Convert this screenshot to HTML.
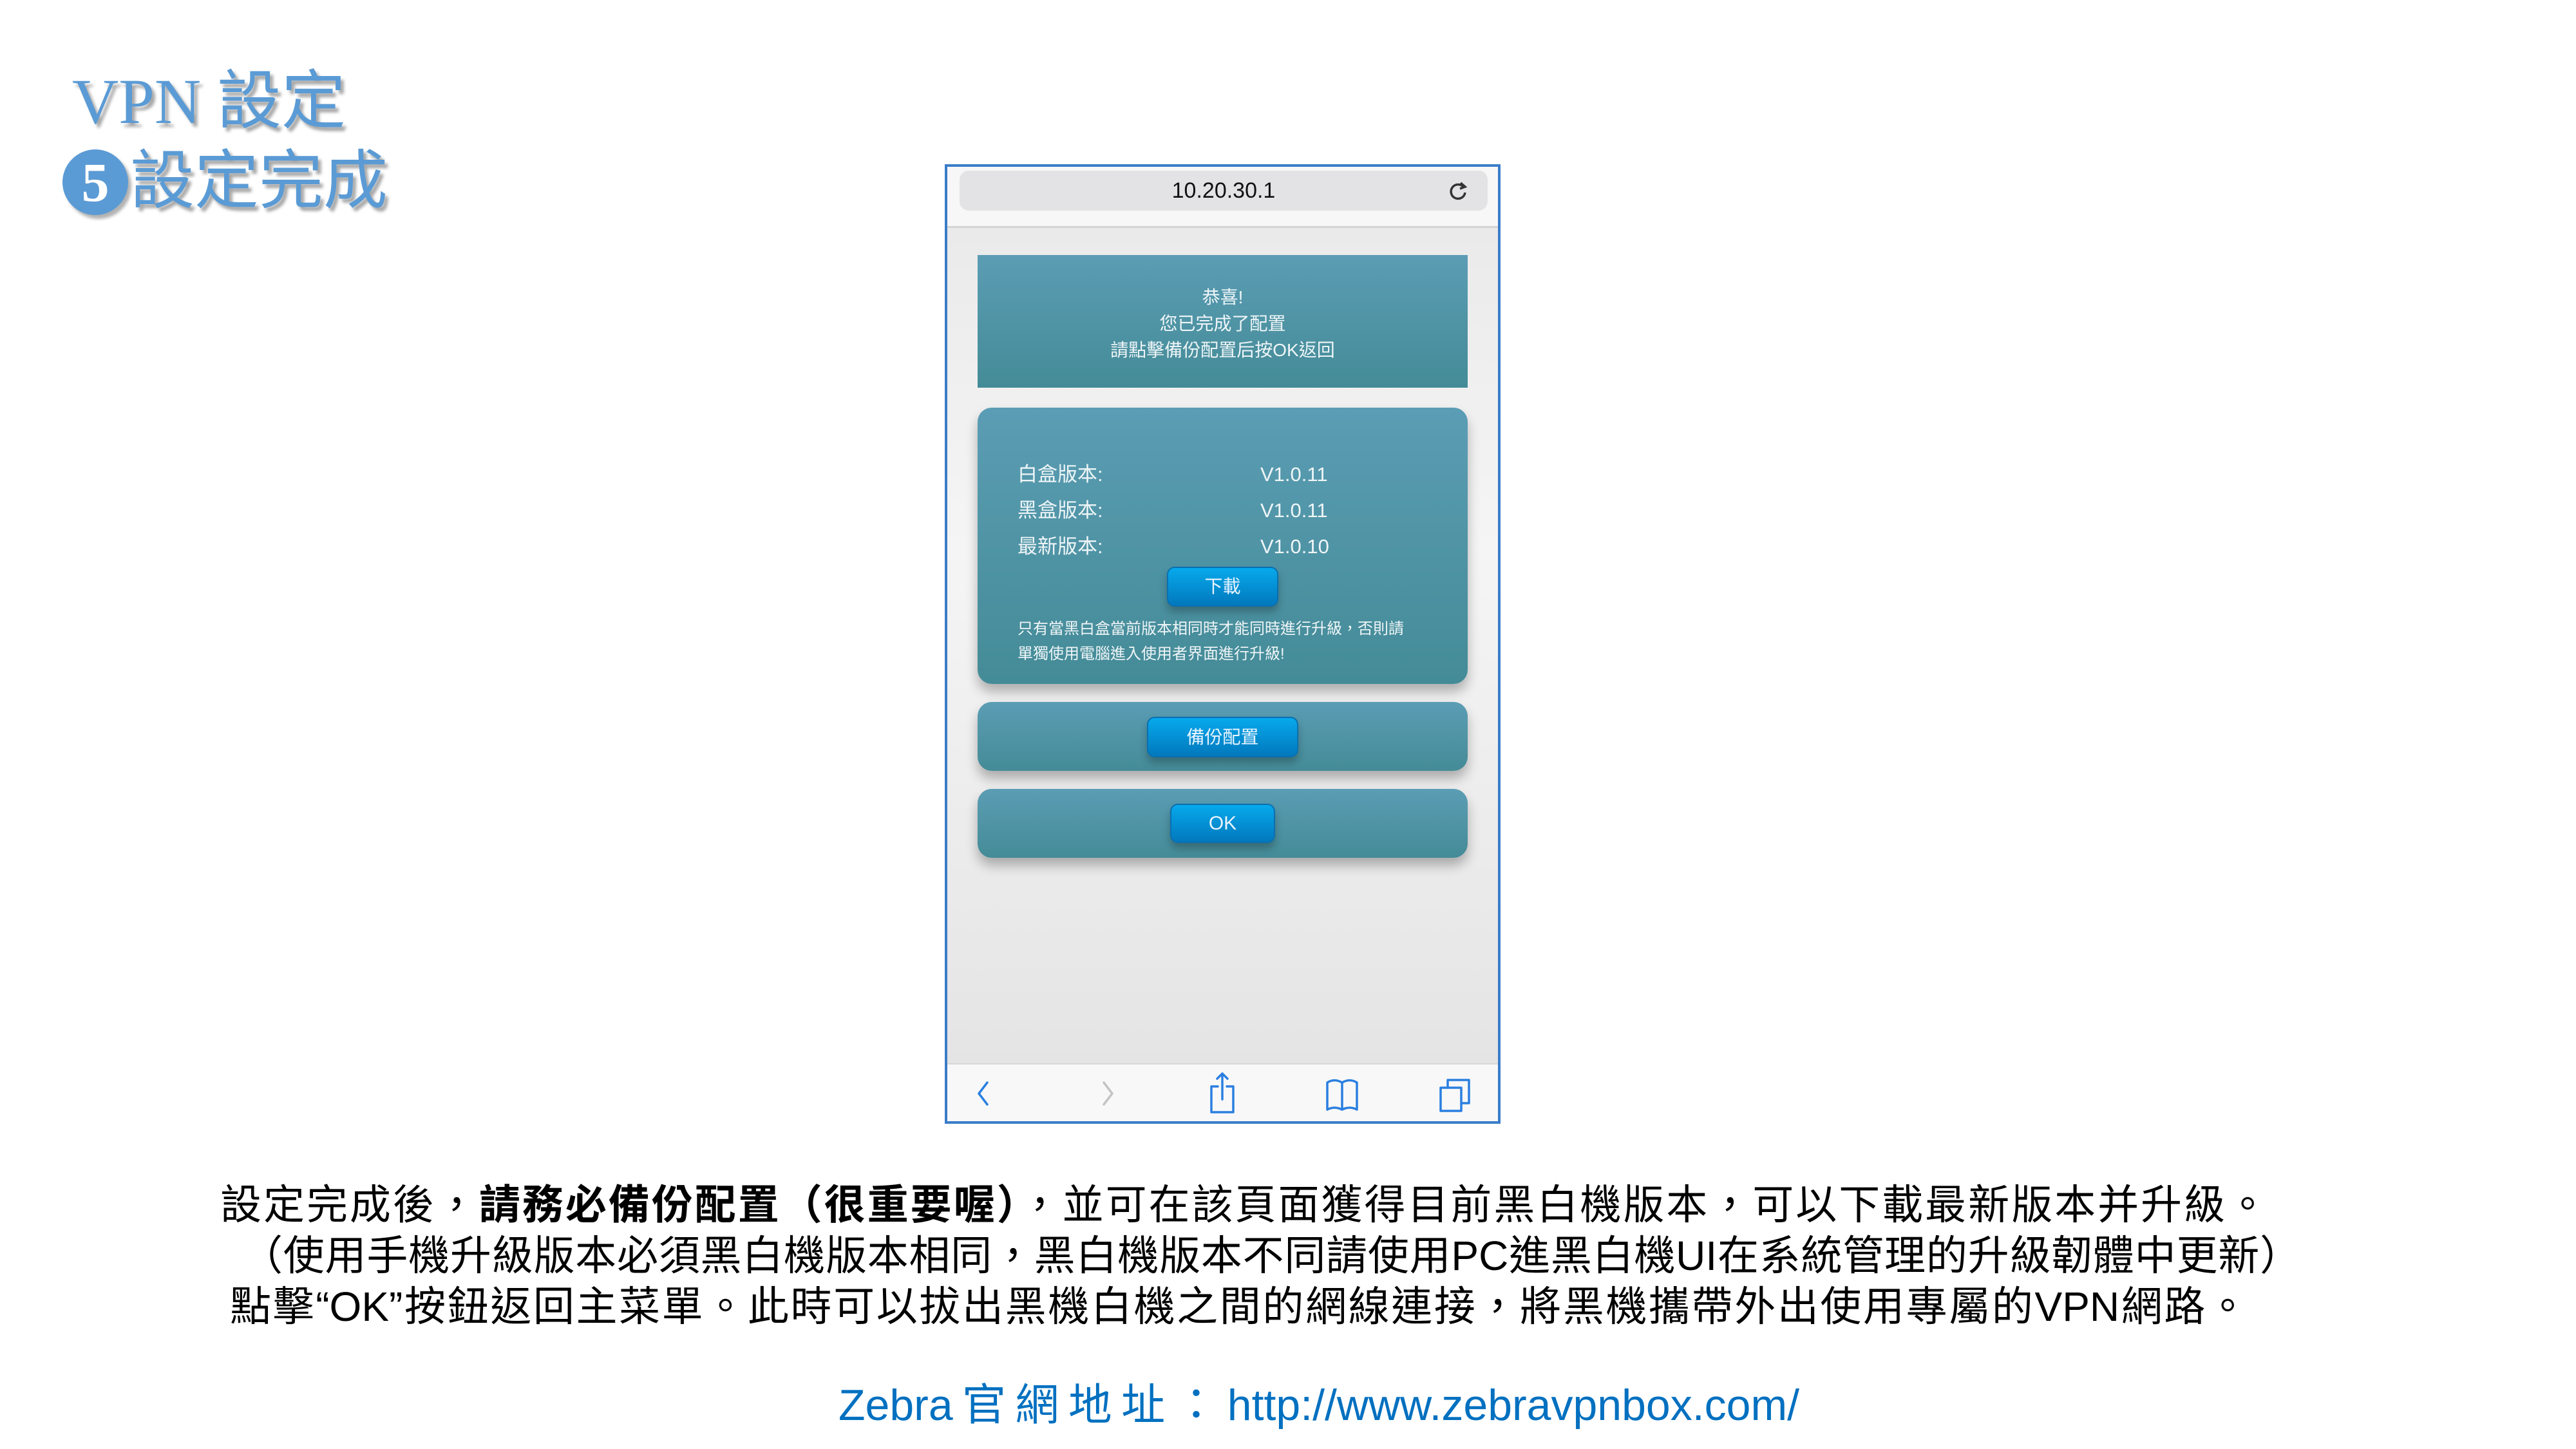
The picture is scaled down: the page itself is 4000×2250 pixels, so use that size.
<!DOCTYPE html>
<html><head><meta charset="utf-8"><style>
*{margin:0;padding:0;box-sizing:border-box}
body{width:4000px;height:2250px;background:#fff;position:relative;overflow:hidden;font-family:"Liberation Sans","Noto Sans CJK TC",sans-serif}
.abs{position:absolute}
.title{color:#5b9bd5;font-size:100px;line-height:100px;font-family:"Liberation Serif","Noto Sans CJK TC",sans-serif;text-shadow:5px 6px 5px rgba(0,0,0,.35);white-space:nowrap}
.jl{position:absolute;height:80px;line-height:80px;font-size:64px;color:#000;text-align:justify;text-align-last:justify;white-space:nowrap;font-family:"Liberation Sans","Noto Sans CJK TC",sans-serif}
.phone{left:1467px;top:255px;width:863px;height:1490px;border:4px solid #3a7dc9;background:linear-gradient(#e8e8e8 0%,#f5f5f5 40%,#e4e4e4 95%);overflow:hidden}
.card{position:absolute;left:47px;width:761px;background:linear-gradient(#5b9db4,#448b97);border-radius:22px;box-shadow:0 12px 18px rgba(0,0,0,.28)}
.btn{position:absolute;background:linear-gradient(#07a9ec,#0278bd);border:2px solid #0a6fb0;border-radius:12px;color:#e8f4ff;text-align:center;box-shadow:0 8px 12px rgba(0,0,0,.25)}
.wt{color:#eef5f7}
</style></head><body>
<div class="abs title" style="left:112px;top:108px">VPN 設定</div>
<div class="abs" style="left:97px;top:232px;width:102px;height:102px;border-radius:50%;background:#5b9bd5;box-shadow:5px 6px 5px rgba(0,0,0,.3);color:#fff;font-family:'Liberation Serif',serif;font-weight:bold;font-size:86px;line-height:102px;text-align:center">5</div>
<div class="abs title" style="left:202px;top:232px">設定完成</div>

<div class="abs phone">
  <div class="abs" style="left:0;top:0;width:855px;height:95px;background:#f7f7f7;border-bottom:3px solid #d4d4d4"></div>
  <div class="abs" style="left:19px;top:6px;width:820px;height:62px;background:#e3e3e5;border-radius:14px;text-align:center;font-size:34px;line-height:62px;color:#111">10.20.30.1</div>
  <svg class="abs" style="left:775px;top:20px" width="36" height="36" viewBox="0 0 36 36"><path d="M27 12 A11 11 0 1 0 29 20" fill="none" stroke="#333" stroke-width="3.5"/><path d="M22 5 L29 11 L21 14" fill="none" stroke="#333" stroke-width="3.5"/></svg>
  <div class="abs" style="left:47px;top:137px;width:761px;height:206px;background:linear-gradient(#5b9db4,#448b97)"></div>
  <div class="abs wt" style="left:47px;top:182px;width:761px;text-align:center;font-size:28px;line-height:41px">恭喜!<br>您已完成了配置<br>請點擊備份配置后按OK返回</div>
  <div class="card" style="top:374px;height:429px"></div>
  <div class="abs wt" style="left:109px;top:450px;font-size:31px;line-height:56px">白盒版本:<br>黑盒版本:<br>最新版本:</div>
  <div class="abs wt" style="left:486px;top:450px;font-size:31px;line-height:56px">V1.0.11<br>V1.0.11<br>V1.0.10</div>
  <div class="btn" style="left:341px;top:621px;width:173px;height:62px;font-size:28px;line-height:58px">下載</div>
  <div class="abs wt" style="left:109px;top:698px;font-size:24px;line-height:39px;white-space:nowrap">只有當黑白盒當前版本相同時才能同時進行升級，否則請<br>單獨使用電腦進入使用者界面進行升級!</div>
  <div class="card" style="top:831px;height:107px"></div>
  <div class="btn" style="left:310px;top:854px;width:235px;height:63px;font-size:28px;line-height:59px">備份配置</div>
  <div class="card" style="top:966px;height:107px"></div>
  <div class="btn" style="left:346px;top:989px;width:163px;height:61px;font-size:30px;line-height:57px">OK</div>
  <div class="abs" style="left:0;top:1392px;width:855px;height:100px;background:#f8f8f8;border-top:2px solid #d8d8d8"></div>
  <svg class="abs" style="left:0;top:1392px" width="855" height="94" viewBox="0 0 855 94">
    <g fill="none" stroke-width="3.5" stroke-linecap="round" stroke-linejoin="round">
      <path d="M62 30 L49 47 L62 64" stroke="#2a7fe0"/>
      <path d="M243 30 L256 47 L243 64" stroke="#c4c4c4"/>
      <g stroke="#2a7fe0"><path d="M420 36 H410 V76 H444 V36 H434"/><path d="M427 16 V56 M419 24 L427 16 L435 24"/>
      <path d="M590 30 Q601 23 613 30 Q625 23 636 30 V72 Q625 66 613 72 Q601 66 590 72 Z M613 30 V72"/>
      <rect x="766" y="38" width="32" height="36"/><path d="M777 38 V26 H810 V62 H798"/></g>
    </g>
  </svg>
</div>

<div class="jl" style="left:342px;top:1831px;width:3180px">設定完成後，<b>請務必備份配置（很重要喔）</b>，並可在該頁面獲得目前黑白機版本，可以下載最新版本并升級。</div>
<div class="jl" style="left:375px;top:1910px;width:3198px">（使用手機升級版本必須黑白機版本相同，黑白機版本不同請使用PC進黑白機UI在系統管理的升級韌體中更新）</div>
<div class="jl" style="left:357px;top:1989px;width:3134px">點擊“OK”按鈕返回主菜單。此時可以拔出黑機白機之間的網線連接，將黑機攜帶外出使用專屬的VPN網路。</div>
<div class="jl" style="left:1302px;top:2137px;width:1492px;height:90px;line-height:90px;font-size:68px;color:#0070c0">Zebra官網地址：http://www.zebravpnbox.com/</div>
</body></html>
